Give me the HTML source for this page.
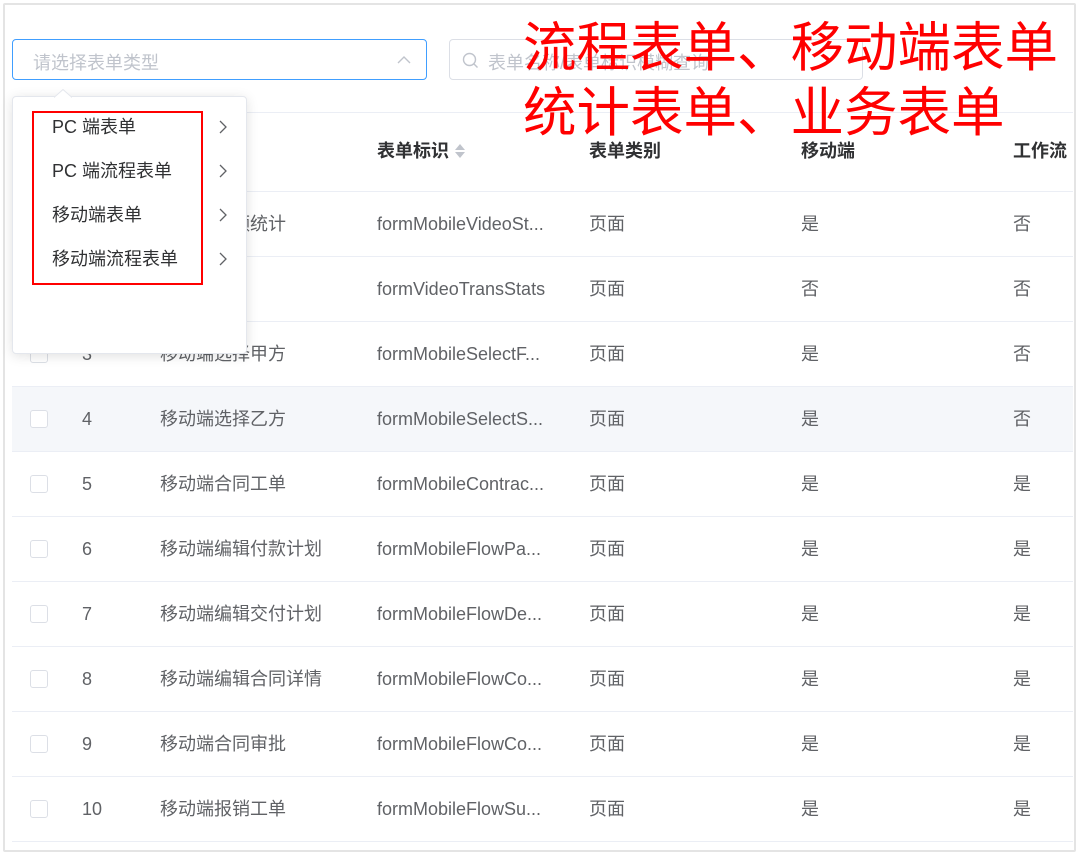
<!DOCTYPE html>
<html><head><meta charset="utf-8"><style>
*{box-sizing:border-box;margin:0;padding:0}
body{width:1080px;height:854px;background:#fff;position:relative;overflow:hidden;font-family:"Liberation Sans","Noto Sans CJK SC",sans-serif;color:#606266}
.frame{position:absolute;left:3px;top:3px;width:1073px;height:849px;border:2px solid #e4e4e4;border-radius:2px}
.abs{position:absolute}
.sel{left:12px;top:39px;width:415px;height:41px;border:1px solid #409eff;border-radius:4px}
.ph{color:#c0c4cc;font-size:18px}
.srch{left:449px;top:39px;width:414px;height:41px;border:1px solid #dcdfe6;border-radius:4px}
.line{position:absolute;left:12px;width:1061px;height:1px;background:#ebeef5}
.hl{position:absolute;left:12px;top:387px;width:1061px;height:64px;background:#f5f7fa}
.t{position:absolute;font-size:18px;line-height:20px;white-space:nowrap}
.h{font-weight:bold;color:#303133;font-size:18px}
.cb{position:absolute;left:30px;width:18px;height:18px;border:1px solid #dcdfe6;border-radius:3px;background:#fff}
.dd{left:12px;top:96px;width:235px;height:258px;background:#fff;border:1px solid #e4e7ed;border-radius:4px;box-shadow:0 2px 12px rgba(0,0,0,.12)}
.red{left:32px;top:111px;width:171px;height:174px;border:2px solid #f00}
.big{position:absolute;left:523px;color:#f00;font-size:53.5px;line-height:60px;white-space:nowrap;font-family:"Noto Sans CJK SC",sans-serif}
</style></head><body>
<div class="frame"></div>
<div class="abs sel"><span class="abs ph" style="left:20px;top:9px">请选择表单类型</span>
<svg class="abs" style="left:384px;top:13px" width="14" height="14" viewBox="0 0 14 14"><path d="M1 10 L7 4 L13 10" fill="none" stroke="#c0c4cc" stroke-width="1.4"/></svg></div>
<div class="abs srch"><svg class="abs" style="left:12px;top:12px" width="17" height="17" viewBox="0 0 17 17"><circle cx="7.5" cy="7.5" r="6" fill="none" stroke="#c0c4cc" stroke-width="1.4"/><path d="M12 12 L15.5 15.5" stroke="#c0c4cc" stroke-width="1.4"/></svg><span class="abs ph" style="left:38px;top:9px">表单名称/表单标识模糊查询</span></div>

<div class="line" style="top:112px"></div>
<div class="t h" style="left:377px;top:141px">表单标识 <svg width="12" height="16" viewBox="0 0 12 16" style="vertical-align:-2px"><path d="M6 1 L11 7 H1Z M6 15 L11 9 H1Z" fill="#c0c4cc"/></svg></div>
<div class="t h" style="left:589px;top:141px">表单类别</div>
<div class="t h" style="left:801px;top:141px">移动端</div>
<div class="t h" style="left:1013px;top:141px">工作流</div>
<div class="hl"></div>
<div class="line" style="top:191px"></div><div class="line" style="top:256px"></div><div class="line" style="top:321px"></div><div class="line" style="top:386px"></div><div class="line" style="top:451px"></div><div class="line" style="top:516px"></div><div class="line" style="top:581px"></div><div class="line" style="top:646px"></div><div class="line" style="top:711px"></div><div class="line" style="top:776px"></div><div class="line" style="top:841px"></div>

<div class="t" style="left:160px;top:214px">移动端视频统计</div><div class="t" style="left:377px;top:214px">formMobileVideoSt...</div><div class="t" style="left:589px;top:214px">页面</div><div class="t" style="left:801px;top:214px">是</div><div class="t" style="left:1013px;top:214px">否</div>
<div class="t" style="left:377px;top:279px">formVideoTransStats</div><div class="t" style="left:589px;top:279px">页面</div><div class="t" style="left:801px;top:279px">否</div><div class="t" style="left:1013px;top:279px">否</div>
<div class="cb" style="top:345px"></div><div class="t" style="left:82px;top:344px">3</div><div class="t" style="left:160px;top:344px">移动端选择甲方</div><div class="t" style="left:377px;top:344px">formMobileSelectF...</div><div class="t" style="left:589px;top:344px">页面</div><div class="t" style="left:801px;top:344px">是</div><div class="t" style="left:1013px;top:344px">否</div>
<div class="cb" style="top:410px"></div><div class="t" style="left:82px;top:409px">4</div><div class="t" style="left:160px;top:409px">移动端选择乙方</div><div class="t" style="left:377px;top:409px">formMobileSelectS...</div><div class="t" style="left:589px;top:409px">页面</div><div class="t" style="left:801px;top:409px">是</div><div class="t" style="left:1013px;top:409px">否</div>
<div class="cb" style="top:475px"></div><div class="t" style="left:82px;top:474px">5</div><div class="t" style="left:160px;top:474px">移动端合同工单</div><div class="t" style="left:377px;top:474px">formMobileContrac...</div><div class="t" style="left:589px;top:474px">页面</div><div class="t" style="left:801px;top:474px">是</div><div class="t" style="left:1013px;top:474px">是</div>
<div class="cb" style="top:540px"></div><div class="t" style="left:82px;top:539px">6</div><div class="t" style="left:160px;top:539px">移动端编辑付款计划</div><div class="t" style="left:377px;top:539px">formMobileFlowPa...</div><div class="t" style="left:589px;top:539px">页面</div><div class="t" style="left:801px;top:539px">是</div><div class="t" style="left:1013px;top:539px">是</div>
<div class="cb" style="top:605px"></div><div class="t" style="left:82px;top:604px">7</div><div class="t" style="left:160px;top:604px">移动端编辑交付计划</div><div class="t" style="left:377px;top:604px">formMobileFlowDe...</div><div class="t" style="left:589px;top:604px">页面</div><div class="t" style="left:801px;top:604px">是</div><div class="t" style="left:1013px;top:604px">是</div>
<div class="cb" style="top:670px"></div><div class="t" style="left:82px;top:669px">8</div><div class="t" style="left:160px;top:669px">移动端编辑合同详情</div><div class="t" style="left:377px;top:669px">formMobileFlowCo...</div><div class="t" style="left:589px;top:669px">页面</div><div class="t" style="left:801px;top:669px">是</div><div class="t" style="left:1013px;top:669px">是</div>
<div class="cb" style="top:735px"></div><div class="t" style="left:82px;top:734px">9</div><div class="t" style="left:160px;top:734px">移动端合同审批</div><div class="t" style="left:377px;top:734px">formMobileFlowCo...</div><div class="t" style="left:589px;top:734px">页面</div><div class="t" style="left:801px;top:734px">是</div><div class="t" style="left:1013px;top:734px">是</div>
<div class="cb" style="top:800px"></div><div class="t" style="left:82px;top:799px">10</div><div class="t" style="left:160px;top:799px">移动端报销工单</div><div class="t" style="left:377px;top:799px">formMobileFlowSu...</div><div class="t" style="left:589px;top:799px">页面</div><div class="t" style="left:801px;top:799px">是</div><div class="t" style="left:1013px;top:799px">是</div>

<div class="abs dd"></div>
<svg class="abs" style="left:54px;top:89px" width="18" height="9"><path d="M0 8.5 L9 0.5 L18 8.5" fill="#fff" stroke="#e4e7ed"/></svg>
<div class="t" style="left:52px;top:117px;color:#303133">PC 端表单</div>
<div class="t" style="left:52px;top:161px;color:#303133">PC 端流程表单</div>
<div class="t" style="left:52px;top:205px;color:#303133">移动端表单</div>
<div class="t" style="left:52px;top:249px;color:#303133">移动端流程表单</div>
<svg class="abs" style="left:218px;top:119px" width="10" height="160" viewBox="0 0 10 160"><g fill="none" stroke="#606266" stroke-width="1.3"><path d="M2 2 L8 8 L2 14"/><path d="M2 46 L8 52 L2 58"/><path d="M2 90 L8 96 L2 102"/><path d="M2 134 L8 140 L2 146"/></g></svg>
<div class="abs red"></div>

<div class="big" style="top:14px">流程表单、移动端表单</div>
<div class="big" style="top:79px">统计表单、业务表单</div>
</body></html>
